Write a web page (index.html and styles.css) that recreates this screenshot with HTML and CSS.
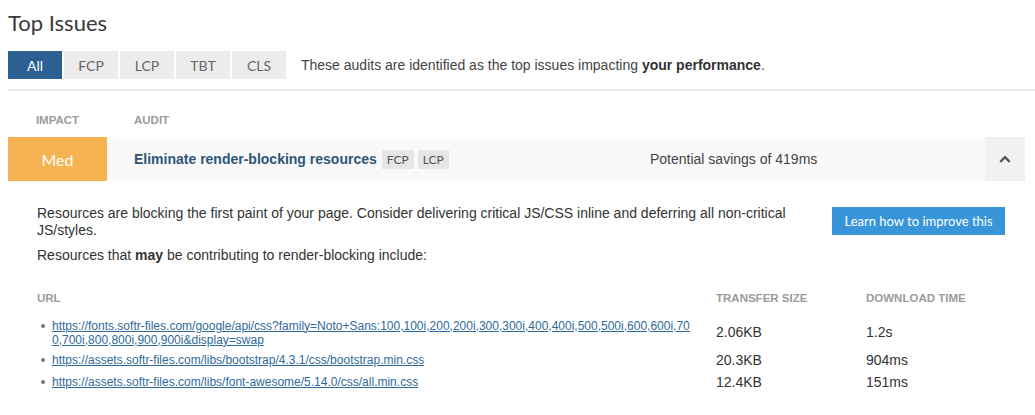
FILE: index.html
```html
<!DOCTYPE html>
<html lang="en">
<head>
<meta charset="utf-8">
<title>Top Issues</title>
<link rel="stylesheet" href="styles.css">
</head>
<body>
<div class="page">
  <h1 class="heading">Top Issues</h1>
  <div class="filters">
    <div class="tabs">
      <button class="tab tab-active">All</button>
      <button class="tab">FCP</button>
      <button class="tab">LCP</button>
      <button class="tab">TBT</button>
      <button class="tab">CLS</button>
    </div>
    <p class="filter-note">These audits are identified as the top issues impacting <strong>your performance</strong>.</p>
  </div>
  <div class="divider"></div>
  <div class="issues">
    <div class="issue-head">
      <span class="head-impact">Impact</span>
      <span class="head-audit">Audit</span>
    </div>
    <div class="issue-row">
      <div class="impact impact-med">Med</div>
      <div class="audit">
        <span class="audit-name">Eliminate render-blocking resources</span>
        <span class="badge">FCP</span>
        <span class="badge">LCP</span>
      </div>
      <div class="savings">Potential savings of 419ms</div>
      <div class="toggle">
        <svg class="chevron" width="12" height="8" viewBox="0 0 12 8"><polyline points="1.3,6.8 6,2.2 10.7,6.8" fill="none" stroke="#555" stroke-width="2.4"/></svg>
      </div>
    </div>
    <div class="details">
      <div class="details-top">
        <div class="desc">
          <p class="desc-text">Resources are blocking the first paint of your page. Consider delivering critical JS/CSS inline and deferring all non-critical JS/styles.</p>
          <p class="desc-text">Resources that <strong>may</strong> be contributing to render-blocking include:</p>
        </div>
        <a class="learn-btn" href="#">Learn how to improve this</a>
      </div>
      <div class="resources">
        <div class="res-row res-head">
          <span>URL</span>
          <span>Transfer Size</span>
          <span>Download Time</span>
        </div>
        <div class="res-row">
          <div class="res-url"><a href="#">https://fonts.softr-files.com/google/api/css?family=Noto+Sans:100,100i,200,200i,300,300i,400,400i,500,500i,600,600i,700,700i,800,800i,900,900i&amp;display=swap</a></div>
          <span class="res-val">2.06KB</span>
          <span class="res-val">1.2s</span>
        </div>
        <div class="res-row">
          <div class="res-url"><a href="#">https://assets.softr-files.com/libs/bootstrap/4.3.1/css/bootstrap.min.css</a></div>
          <span class="res-val">20.3KB</span>
          <span class="res-val">904ms</span>
        </div>
        <div class="res-row">
          <div class="res-url"><a href="#">https://assets.softr-files.com/libs/font-awesome/5.14.0/css/all.min.css</a></div>
          <span class="res-val">12.4KB</span>
          <span class="res-val">151ms</span>
        </div>
      </div>
    </div>
  </div>
</div>
</body>
</html>
```

FILE: styles.css
```css
* { box-sizing: border-box; }

body {
  margin: 0;
  background: #fff;
  font-family: "Liberation Sans", Arial, sans-serif;
  font-size: 14px;
  color: #333;
}

.page {
  padding-left: 8px;
}

.heading {
  margin: 10px 0 0;
  font-family: Lato, "Open Sans", sans-serif;
  font-weight: 400;
  font-size: 22px;
  line-height: 26px;
  color: #3a3a3a;
}

.filters {
  display: flex;
  align-items: center;
  margin-top: 15px;
}

.tabs {
  display: flex;
  gap: 2px;
}

.tab {
  width: 54px;
  height: 28px;
  border: 0;
  padding: 0;
  background: #ececec;
  color: #666;
  font-family: Lato, "Open Sans", sans-serif;
  font-size: 14px;
}

.tab-active {
  background: #2c5f92;
  color: #fff;
}

.filter-note {
  margin: 0 0 0 15px;
  font-size: 14px;
  color: #444;
}

.filter-note strong {
  color: #333;
}

.divider {
  height: 2px;
  margin-top: 10px;
  background: #ebebeb;
}

.issues {
  margin-right: 10px;
}

.issue-head {
  display: flex;
  padding: 21px 0 9px;
  font-size: 11.5px;
  font-weight: 700;
  line-height: 16px;
  color: #9b9b9b;
  text-transform: uppercase;
}

.head-impact {
  width: 99px;
  text-align: center;
}

.head-audit {
  padding-left: 27px;
}

.issue-row {
  display: grid;
  grid-template-columns: 99px 1fr 335px 40px;
  height: 44px;
  background: #f9f9f9;
}

.impact {
  display: flex;
  align-items: center;
  justify-content: center;
  font-family: Lato, "Open Sans", sans-serif;
  font-size: 16px;
  color: #fff;
}

.impact-med {
  background: #f5b351;
}

.audit {
  display: flex;
  align-items: center;
  padding-left: 27px;
}

.audit-name {
  font-weight: 700;
  color: #2c5678;
  margin-right: 5px;
}

.badge {
  height: 19px;
  padding: 0 5px;
  margin-right: 4px;
  background: #e6e6e6;
  color: #555;
  font-family: Lato, "Open Sans", sans-serif;
  font-size: 12px;
  line-height: 19px;
}

.savings {
  display: flex;
  align-items: center;
  color: #444;
}

.toggle {
  display: flex;
  align-items: center;
  justify-content: center;
  background: #f1f1f1;
}

.details {
  padding: 24px 20px 20px 29px;
}

.details-top {
  display: flex;
  align-items: flex-start;
  gap: 32px;
}

.desc {
  flex: 1;
}

.desc-text {
  margin: 0 0 8px;
  line-height: 17px;
  color: #333;
}

.learn-btn {
  flex: none;
  width: 173px;
  height: 28px;
  margin-top: 2px;
  display: flex;
  align-items: center;
  justify-content: center;
  background: #3895da;
  color: #fff;
  font-family: Lato, "Open Sans", sans-serif;
  font-size: 13px;
  text-decoration: none;
}

.resources {
  margin-top: 18px;
}

.res-row {
  display: grid;
  grid-template-columns: 679px 150px 1fr;
  align-items: center;
  padding: 2.5px 0;
}

.res-head {
  padding: 0 0 10px;
  font-size: 11.5px;
  font-weight: 700;
  line-height: 16px;
  color: #9b9b9b;
  text-transform: uppercase;
}

.res-url {
  display: flex;
  align-items: flex-start;
  padding-right: 24px;
  font-size: 12px;
  line-height: 14px;
}

.res-url::before {
  content: "";
  flex: none;
  width: 4px;
  height: 4px;
  margin: 5px 7px 0 4px;
  border-radius: 50%;
  background: #777;
}

.res-url a {
  color: #2f6a9c;
  text-decoration: underline;
  word-break: break-all;
}

.res-val {
  line-height: 17px;
  color: #333;
}
```
